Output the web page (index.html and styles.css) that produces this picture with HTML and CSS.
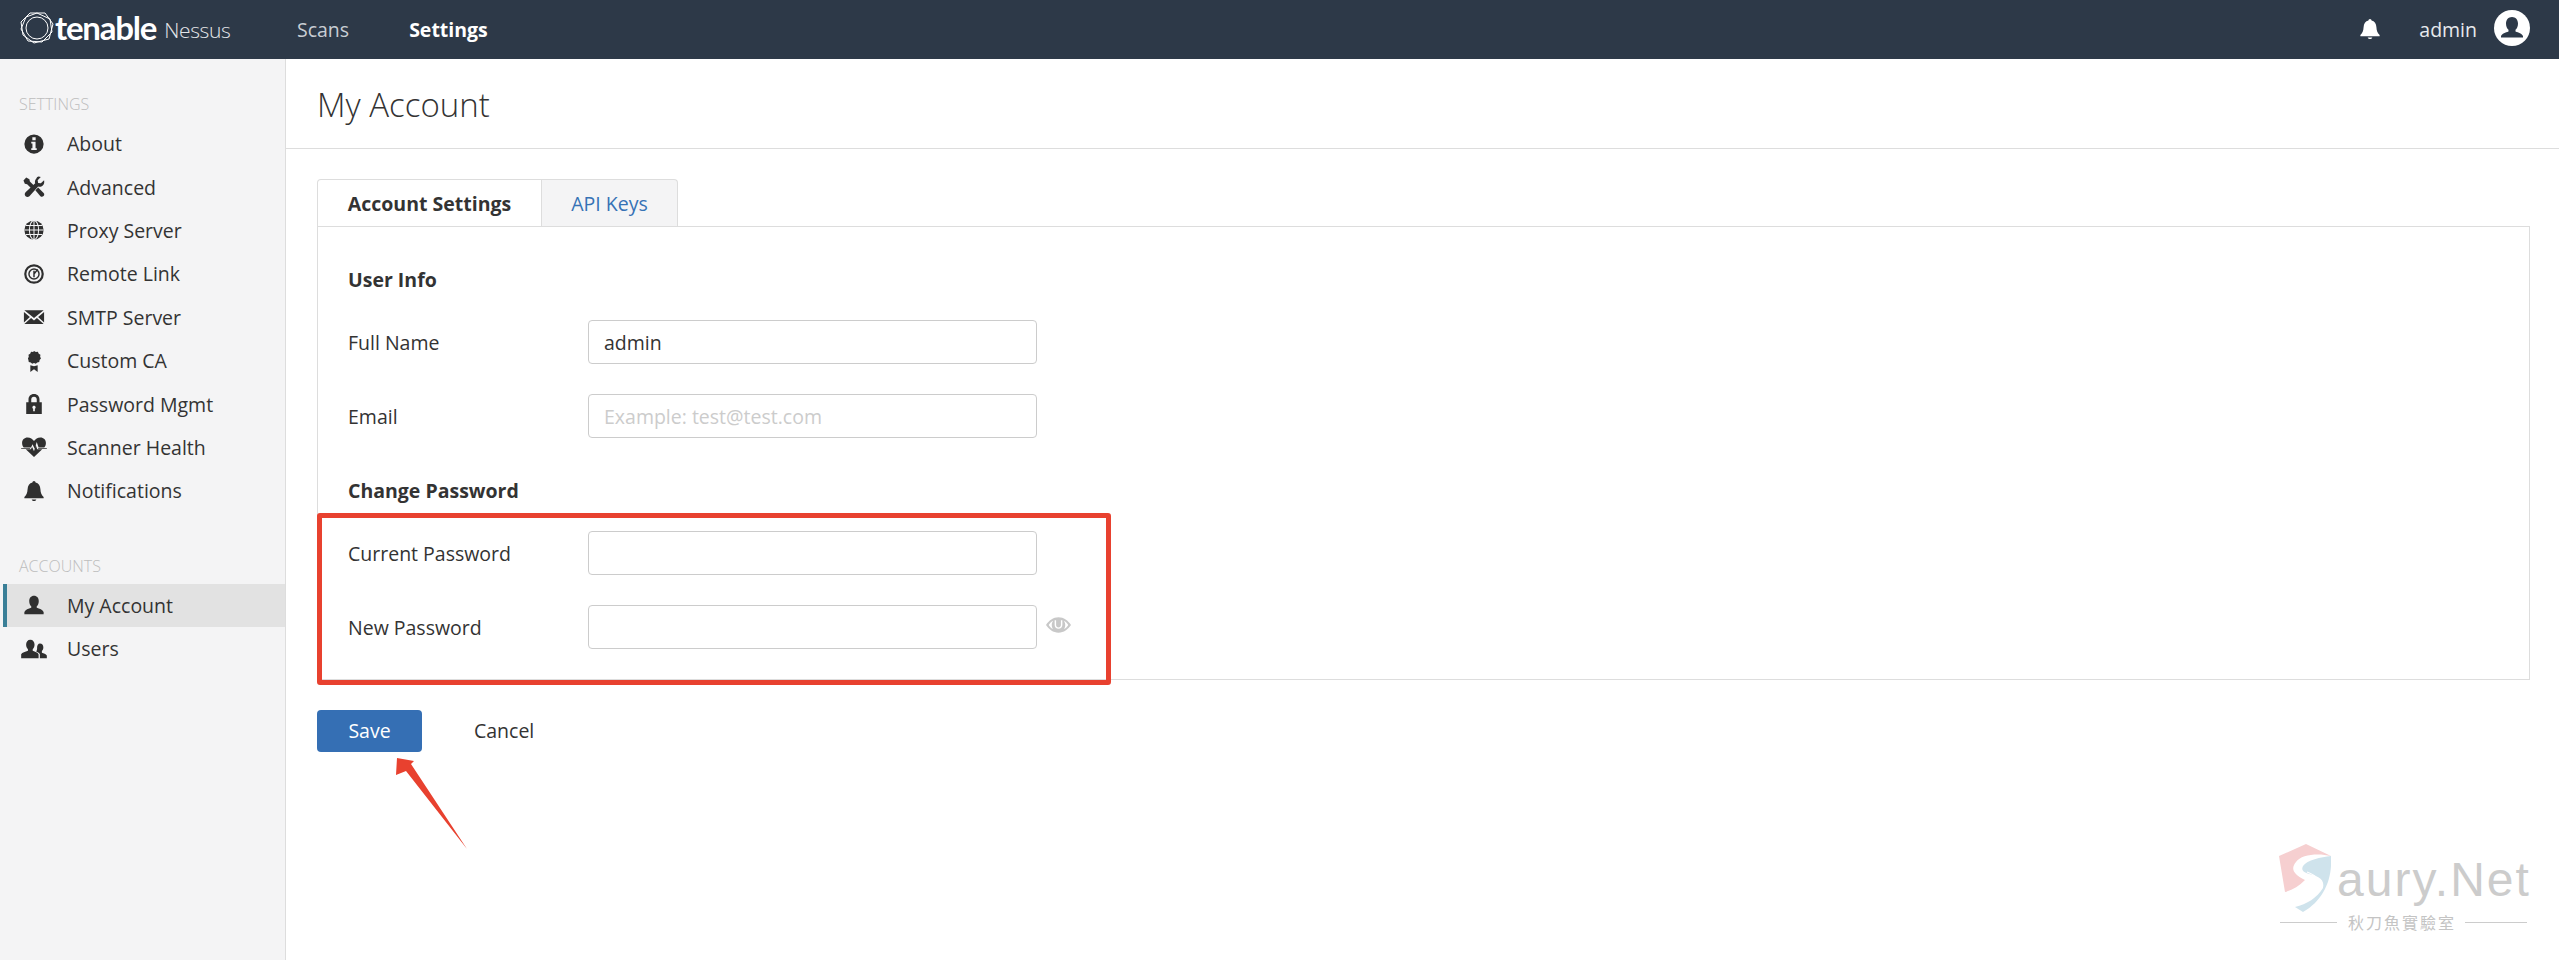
FILE: index.html
```html
<!DOCTYPE html>
<html lang="en">
<head>
    <meta charset="UTF-8">
    <title>Nessus - My Account</title>
    <link rel="stylesheet" href="styles.css">
</head>
<body>

<header class="topbar">
    <div class="logo">
        <svg class="logo-mark" viewBox="0 0 34 32" fill="none" stroke="#fff" stroke-width="1">
            <polygon points="10,1 25,1 33,12 29,27 14,31 3,23 1,10"/>
            <polygon points="17,1 30,7 32,20 22,30 8,29 1,17 6,5"/>
            <circle cx="17" cy="16" r="11"/>
        </svg>
        <span class="logo-name">tenable</span>
        <span class="logo-product">Nessus</span>
    </div>
    <nav class="topnav">
        <a class="topnav-link">Scans</a>
        <a class="topnav-link topnav-active">Settings</a>
    </nav>
    <div class="topbar-right">
        <svg class="top-bell" viewBox="0 0 24 24" fill="#fff"><path d="M12 1c1 0 1.700.8 1.700 1.800C17 3.600 18.800 6.300 19 10c.2 4 1.200 6.500 3.500 8.500v1.300h-21v-1.300C3.800 16.500 4.800 14 5 10c.2-3.700 2-6.400 5.300-7.200C10.300 1.800 11 1 12 1z"/><path d="M9.500 21.200h5c-.4 1.200-1.400 1.800-2.500 1.800s-2.100-.6-2.500-1.800z"/></svg>
        <span class="top-user">admin</span>
        <svg class="top-avatar" viewBox="0 0 36 36">
            <circle cx="18" cy="18" r="18" fill="#fff"/>
            <path fill="#2d3948" d="M18 7c3.600 0 6 2.800 6 6.500 0 2.700-1 5-2.500 6.300v1.700c3 1 6.500 2 7.500 4.500v1.500H7v-1.500c1-2.500 4.500-3.500 7.500-4.500v-1.700C13 18.500 12 16.200 12 13.500 12 9.800 14.400 7 18 7z"/>
        </svg>
    </div>
</header>

<div class="layout">
    <aside class="sidebar">
        <div class="side-title side-title-first">SETTINGS</div>
        <a class="side-item">
            <svg class="side-icon" viewBox="0 0 24 24"><path fill-rule="evenodd" d="M12 1.500a10.500 10.500 0 1 1 0 21 10.500 10.500 0 0 1 0-21zM10.200 4.500v3.300h3.600V4.500zM9 9.500v2h1.300v5H9v2h6v-2h-1.300v-7z"/></svg>
            About
        </a>
        <a class="side-item">
            <svg class="side-icon" viewBox="0 0 24 24"><path d="M3.500 1.500l3.500 2 .5 2.500 5 5-3 3-5-5-2.500-.5L.5 5zM17 .5c1 0 1.700.2 2.400.5L16 4.500l.5 3 3 .5 3.500-3.500c.5 2.500 0 4.500-1.400 5.900-1.400 1.400-3.300 1.700-5.100 1.100L7 22c-1.200 1.100-3 1.100-4.200 0-1.200-1.200-1.200-3 0-4.200L13.300 8c-.6-1.800-.3-3.700 1.100-5.100C15.200 1.500 16 .5 17 .5z"/><path d="M13.500 15.500l3-3 6 6c1.100 1.200.7 2.500-.1 3.400-.9.900-2.200 1.200-3.400.1z"/></svg>
            Advanced
        </a>
        <a class="side-item">
            <svg class="side-icon" viewBox="0 0 24 24"><circle cx="12" cy="12" r="10.500"/><g fill="none" stroke="#f4f4f5" stroke-width="1.100"><ellipse cx="12" cy="12" rx="5" ry="10.500"/><path d="M12 1.500v21M1.500 12h21M3 7h18M3 17h18"/></g></svg>
            Proxy Server
        </a>
        <a class="side-item">
            <svg class="side-icon side-icon-line" viewBox="0 0 24 24"><circle cx="12" cy="12" r="9.500" stroke-width="2.400"/><circle cx="12" cy="12" r="5.500" stroke-width="1.600"/><path stroke-width="1.600" d="M12 12l4-5M12 8.500v7"/></svg>
            Remote Link
        </a>
        <a class="side-item">
            <svg class="side-icon" viewBox="0 0 24 24"><path d="M1.500 4.500h21L12 13zM1 6.500l6.500 5.500L1 18zM23 6.500L16.500 12l6.500 6zM8.800 13l3.200 2.700 3.200-2.700 7.300 6.500h-21z"/></svg>
            SMTP Server
        </a>
        <a class="side-item">
            <svg class="side-icon" viewBox="0 0 24 24"><path d="M12 1l2 1.200 2.200-.2 1 2 1.800 1.100-.3 2.200.9 2-1.500 1.600-.4 2.200-2.200.4-1.500 1.500-2-.7-2 .7-1.500-1.500-2.200-.4-.4-2.200L5.400 9.300l.9-2L6 5.100l1.800-1.100 1-2 2.200.2z"/><path d="M8 16.500l4 1.300 4-1.300V24l-4-3-4 3z"/></svg>
            Custom CA
        </a>
        <a class="side-item">
            <svg class="side-icon" viewBox="0 0 24 24"><path fill-rule="evenodd" d="M12 1c3.800 0 6 2.600 6 6v3h2.500v13h-17V10H6V7c0-3.400 2.200-6 6-6zm0 3c-2 0-3 1.300-3 3v3h6V7c0-1.700-1-3-3-3zm0 10c-1 0-1.800.7-1.800 1.700 0 .7.300 1.200.9 1.500V20h1.800v-2.800c.6-.3.900-.8.900-1.500 0-1-.8-1.700-1.800-1.700z"/></svg>
            Password Mgmt
        </a>
        <a class="side-item">
            <svg class="side-icon side-icon-wide" viewBox="0 0 28 24"><path d="M14 23L5 14.500h5.500l1.500-2.500 2 4.500 2-6.500 1.500 4.500H23zM2.800 12.500C1.600 11 1 9.500 1 7.500 1 4 3.500 1.500 7 1.500c3 0 5.500 1.500 7 4 1.500-2.500 4-4 7-4 3.500 0 6 2.500 6 6 0 2-.6 3.500-1.800 5H19l-2-6-2.300 7.500-2.300-5-1.600 3.500z"/><path d="M0 13.300h9.800v.8H0zM18.500 13.300H28v.8h-9.500z"/></svg>
            Scanner Health
        </a>
        <a class="side-item">
            <svg class="side-icon" viewBox="0 0 24 24"><path d="M12 1c1 0 1.700.8 1.700 1.800C17 3.600 18.800 6.300 19 10c.2 4 1.200 6.500 3.500 8.500v1.300h-21v-1.300C3.800 16.500 4.800 14 5 10c.2-3.700 2-6.400 5.300-7.200C10.300 1.800 11 1 12 1z"/><path d="M9.500 21.200h5c-.4 1.200-1.400 1.800-2.500 1.800s-2.100-.6-2.500-1.800z"/></svg>
            Notifications
        </a>

        <div class="side-title">ACCOUNTS</div>
        <a class="side-item side-active">
            <svg class="side-icon" viewBox="0 0 24 24"><path d="M12 2c3.300 0 5.200 2.500 5.200 5.800 0 2.400-.9 4.400-2.200 5.600v1.600c3 1 6.500 2 7.500 4.500V22h-21v-2.500c1-2.500 4.500-3.500 7.500-4.500v-1.600C7.700 12.200 6.800 10.200 6.800 7.800 6.800 4.500 8.700 2 12 2z"/></svg>
            My Account
        </a>
        <a class="side-item">
            <svg class="side-icon side-icon-wide" viewBox="0 0 28 24"><path d="M10 2c2.900 0 4.600 2.300 4.600 5.200 0 2.200-.8 4-2 5.100v1.500c2.700.9 5.400 1.800 6.400 4V22H0v-4.200c1-2.200 4.700-3.100 7.400-4v-1.500c-1.200-1.100-2-2.900-2-5.100C5.400 4.300 7.100 2 10 2z"/><path d="M20.500 6c2.300 0 3.700 1.800 3.700 4.200 0 1.800-.6 3.200-1.600 4.100V16c2 .6 4.400 1.500 5.400 3v3h-7.600v-4.500c-.9-1.400-2.600-2.300-4-2.900 1-1 1-2.500 1-4.400C17.400 8 18.500 6 20.500 6z"/></svg>
            Users
        </a>
    </aside>

    <main class="content">
        <h1 class="page-title">My Account</h1>
        <div class="page-body">
            <div class="tabs">
                <a class="tab tab-active">Account Settings</a>
                <a class="tab tab-other">API Keys</a>
            </div>
            <form class="panel">
                <h3 class="section-head">User Info</h3>
                <div class="form-row">
                    <label>Full Name</label>
                    <input type="text" value="admin">
                </div>
                <div class="form-row">
                    <label>Email</label>
                    <input type="text" placeholder="Example: test@test.com">
                </div>
                <h3 class="section-head section-second">Change Password</h3>
                <div class="form-row">
                    <label>Current Password</label>
                    <input type="password">
                </div>
                <div class="form-row">
                    <label>New Password</label>
                    <input type="password">
                    <svg class="eye" viewBox="0 0 26 16">
                        <path fill-rule="evenodd" d="M13 0c5.500 0 10 3.500 13 8-3 4.500-7.500 8-13 8S3 12.500 0 8c3-4.500 7.500-8 13-8zM7.500 3.500C5.500 4.500 4 6 2.800 8 4 10 5.500 11.500 7.500 12.500 6.500 11.300 6 9.700 6 8s.5-3.300 1.500-4.500zm11 0C19.500 4.700 20 6.300 20 8s-.5 3.300-1.500 4.500c2-1 3.500-2.500 4.700-4.500-1.200-2-2.700-3.500-4.700-4.500zM9 3v5c0 2.300 1.700 4 4 4s4-1.700 4-4V3h-1.500v5c0 1.500-1 2.600-2.500 2.600S10.500 9.500 10.500 8V3z"/>
                    </svg>
                </div>
            </form>
            <div class="actions">
                <button type="button" class="btn-save">Save</button>
                <a class="btn-cancel">Cancel</a>
            </div>
        </div>
    </main>
</div>

<!-- annotations drawn on top of the screenshot -->
<div class="mark-box"></div>
<svg class="mark-arrow" viewBox="0 0 80 100">
    <polygon fill="#e8412f" points="4,0 21,3 18,6 74,91 13,13 3,17"/>
</svg>

<div class="watermark">
    <svg class="wm-shield" viewBox="0 0 52 68">
        <path fill="#f6cfd0" d="M27 0L52 12C40 9 22 10 17 18 12 24 13 30 26 36 20 42 14 46 6 48L0 12z"/>
        <path fill="#cfe3ec" d="M52 12V22C51 40 42 58 24 68L16 63C28 60 38 54 44 44 46 36 40 32 30 30 24 28 22 26 24 22 28 16 42 13 52 12z"/>
        <path fill="none" stroke="#fff" stroke-width="1.200" d="M11 58C24 54 36 48 39 40 40 34 34 30 28 28"/>
    </svg>
    <span class="wm-name">aury.Net</span>
    <div class="wm-sub">
        <span class="wm-line wm-line-left"></span>
        <span class="wm-cn">秋刀魚實驗室</span>
        <span class="wm-line"></span>
    </div>
</div>

</body>
</html>
```

FILE: styles.css
```css
* {
    box-sizing: border-box;
}
html, body {
    height: 100%;
}
body {
    margin: 0;
    position: relative;
    overflow: hidden;
    background-color: #ffffff;
    color: #333333;
    font-family: "Open Sans", Arial, sans-serif;
    font-size: 19.5px;
}

/* top bar */
.topbar {
    display: flex;
    align-items: center;
    height: 59px;
    padding: 0 29px 0 20px;
    background-color: #2d3948;
    color: #ffffff;
}
.logo {
    display: flex;
    align-items: center;
    width: 277px;
}
.logo-mark {
    width: 34px;
    height: 32px;
    margin-right: 1px;
    margin-top: -3px;
}
.logo-name {
    margin-top: -6px;
    font-family: Lato, Arial, sans-serif;
    font-size: 33px;
    font-weight: 700;
    letter-spacing: -1.2px;
}
.logo-product {
    margin-left: 8px;
    margin-top: 1px;
    font-size: 21px;
    font-weight: 300;
    letter-spacing: -0.4px;
    color: #e4e6e9;
}
.topnav {
    display: flex;
    gap: 60px;
}
.topnav-link {
    color: #c9ced4;
}
.topnav-active {
    font-weight: 700;
    color: #ffffff;
}
.topbar-right {
    display: flex;
    align-items: center;
    margin-left: auto;
}
.top-bell {
    width: 22px;
    height: 22px;
    margin-top: -2px;
}
.top-user {
    margin-left: 38px;
    color: #e8eaed;
}
.top-avatar {
    width: 36px;
    height: 36px;
    margin-left: 17px;
    margin-top: -3px;
}

/* sidebar */
.layout {
    display: flex;
    height: 901px;
}
.sidebar {
    width: 286px;
    flex-shrink: 0;
    padding-top: 35px;
    background-color: #f4f4f5;
    border-right: 1px solid #dddddd;
}
.side-title {
    height: 20px;
    margin: 43px 0 8px 19px;
    font-size: 16px;
    font-weight: 300;
    line-height: 20px;
    color: #bdbdbd;
}
.side-title-first {
    margin-top: 0;
}
.side-item {
    display: flex;
    align-items: center;
    height: 43.4px;
    margin-left: 3px;
    padding-left: 4px;
    color: #333333;
    border-left: 4px solid transparent;
}
.side-active {
    background-color: #e2e2e2;
    border-left-color: #3a7f97;
}
.side-icon {
    width: 22px;
    height: 22px;
    margin: 0 22px 0 12px;
    flex-shrink: 0;
    fill: #2f2f2f;
}
.side-icon-line {
    fill: none;
    stroke: #2f2f2f;
}
.side-icon-wide {
    width: 28px;
    margin: 0 19px 0 9px;
}

/* content */
.content {
    flex-grow: 1;
}
.page-title {
    height: 90px;
    margin: 0;
    padding-left: 31px;
    font-size: 33px;
    font-weight: 300;
    line-height: 92px;
    color: #333333;
    border-bottom: 1px solid #dddddd;
}
.page-body {
    padding: 30px 29px 0 31px;
}
.tabs {
    display: flex;
    height: 47px;
}
.tab {
    display: flex;
    align-items: center;
    justify-content: center;
    border: 1px solid #dddddd;
    border-bottom: none;
}
.tab-active {
    width: 225px;
    font-weight: 700;
    border-radius: 4px 0 0 0;
}
.tab-other {
    width: 137px;
    margin-left: -1px;
    color: #3672b5;
    background-color: #f4f4f5;
    border-radius: 0 4px 0 0;
}
.panel {
    height: 454px;
    padding: 41px 30px 30px;
    border: 1px solid #dddddd;
}
.section-head {
    height: 24px;
    margin: 0 0 28px;
    font-size: 19.5px;
    font-weight: 700;
    line-height: 24px;
}
.section-second {
    margin-top: 41px;
}
.form-row {
    display: flex;
    align-items: center;
    height: 44px;
    margin-bottom: 30px;
}
.form-row label {
    width: 240px;
    flex-shrink: 0;
}
.form-row input {
    width: 449px;
    height: 44px;
    padding: 0 15px;
    font-family: inherit;
    font-size: 19.5px;
    color: #333333;
    background-color: #ffffff;
    border: 1px solid #cccccc;
    border-radius: 4px;
    outline: none;
}
.form-row input::placeholder {
    color: #cccccc;
}
.eye {
    width: 25px;
    height: 16px;
    margin: -4px 0 0 9px;
    fill: #c8c8c8;
}
.actions {
    display: flex;
    align-items: center;
    margin-top: 30px;
}
.btn-save {
    width: 105px;
    height: 42px;
    padding: 0 0 2px;
    font-family: inherit;
    font-size: 19.5px;
    color: #ffffff;
    background-color: #356fb4;
    border: none;
    border-radius: 4px;
}
.btn-cancel {
    margin-left: 52px;
    margin-top: -2px;
}

/* annotations */
.mark-box {
    position: absolute;
    left: 317px;
    top: 513px;
    width: 794px;
    height: 172px;
    border: 5px solid #e8412f;
    border-radius: 3px;
}
.mark-arrow {
    position: absolute;
    left: 393px;
    top: 758px;
    width: 80px;
    height: 100px;
}

/* watermark */
.watermark {
    position: absolute;
    left: 2280px;
    top: 844px;
    width: 247px;
}
.wm-shield {
    position: absolute;
    left: -1px;
    top: 0;
    width: 52px;
    height: 68px;
}
.wm-name {
    display: block;
    margin-left: 57px;
    padding-top: 8px;
    font-family: "Liberation Sans", Arial, sans-serif;
    font-size: 48px;
    line-height: 56px;
    letter-spacing: 2px;
    color: #cccccc;
    white-space: nowrap;
}
.wm-sub {
    display: flex;
    align-items: center;
    margin-top: 3px;
}
.wm-line {
    flex-grow: 1;
    height: 1px;
    background-color: #cccccc;
}
.wm-line-left {
    flex-grow: 0;
    width: 57px;
}
.wm-cn {
    padding: 0 9px 0 11px;
    font-family: "Noto Sans CJK TC", "Noto Sans CJK SC", sans-serif;
    font-size: 16px;
    line-height: 22px;
    letter-spacing: 2px;
    color: #c4c4c4;
}
```
